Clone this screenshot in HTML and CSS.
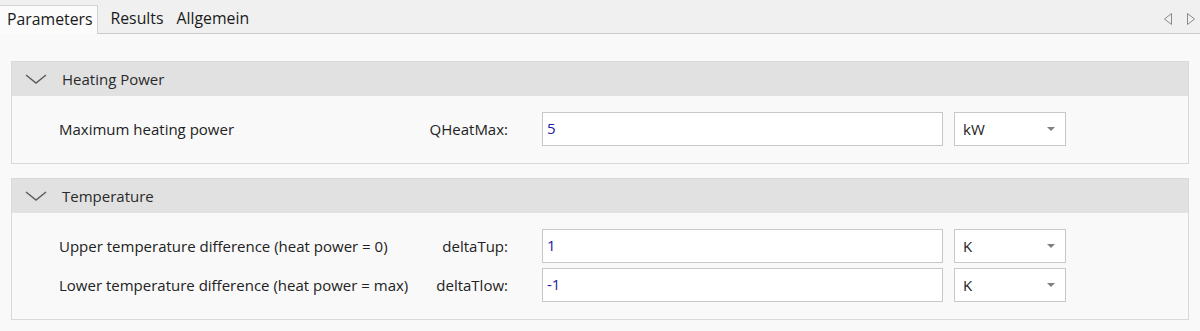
FILE: index.html
```html
<!DOCTYPE html>
<html>
<head>
<meta charset="utf-8">
<link rel="stylesheet" href="styles.css">
</head>
<body>
<div class="tabbar">
  <div class="tabs">
    <div class="tab active">Parameters</div>
    <div class="tab">Results</div>
    <div class="tab">Allgemein</div>
  </div>
  <div class="nav">
    <svg width="10" height="14" viewBox="0 0 10 14"><path d="M8.5 1.5 L1.5 7 L8.5 12.5 Z" fill="none" stroke="#8a8a8a" stroke-width="1"/></svg>
    <svg width="10" height="14" viewBox="0 0 10 14"><path d="M1.5 1.5 L8.5 7 L1.5 12.5 Z" fill="none" stroke="#8a8a8a" stroke-width="1"/></svg>
  </div>
</div>
<div class="content">
  <section class="group">
    <div class="group-head">
      <svg class="chev" width="22" height="10" viewBox="0 0 22 10"><path d="M1 1 L11 9 L21 1" fill="none" stroke="#5a5a5a" stroke-width="1.4"/></svg>
      <span>Heating Power</span>
    </div>
    <div class="group-body">
      <div class="row">
        <div class="labels"><span class="desc">Maximum heating power</span><span class="param">QHeatMax:</span></div>
        <div class="input">5</div>
        <div class="select"><span>kW</span><i class="caret"></i></div>
      </div>
    </div>
  </section>
  <section class="group">
    <div class="group-head">
      <svg class="chev" width="22" height="10" viewBox="0 0 22 10"><path d="M1 1 L11 9 L21 1" fill="none" stroke="#5a5a5a" stroke-width="1.4"/></svg>
      <span>Temperature</span>
    </div>
    <div class="group-body">
      <div class="row">
        <div class="labels"><span class="desc">Upper temperature difference (heat power = 0)</span><span class="param">deltaTup:</span></div>
        <div class="input">1</div>
        <div class="select"><span>K</span><i class="caret"></i></div>
      </div>
      <div class="row">
        <div class="labels"><span class="desc">Lower temperature difference (heat power = max)</span><span class="param">deltaTlow:</span></div>
        <div class="input">-1</div>
        <div class="select"><span>K</span><i class="caret"></i></div>
      </div>
    </div>
  </section>
</div>
</body>
</html>
```
FILE: styles.css
```css
* { box-sizing: border-box; }
html, body {
  margin: 0;
  padding: 0;
  background: #f9f9f9;
  font-family: "Open Sans", "Noto Sans", sans-serif;
  font-size: 15px;
  color: #222;
}
.tabbar {
  display: flex;
  justify-content: space-between;
  align-items: flex-end;
  height: 34px;
  background: #f0f0f0;
  border-bottom: 1px solid #c9c9c9;
  padding-top: 5px;
}
.tabs {
  display: flex;
  align-items: flex-end;
  height: 29px;
}
.tab {
  height: 28px;
  line-height: 26px;
  padding: 0 6px 0 7px;
  font-size: 15.8px;
  color: #1a1a1a;
}
.tab.active {
  height: 29px;
  margin-bottom: -1px;
  background: #fbfbfb;
  border-top: 1px solid #d2d2d2;
  border-right: 1px solid #d2d2d2;
  padding-right: 4px;
  margin-right: 6px;
}
.nav {
  display: flex;
  gap: 13px;
  align-self: flex-start;
  padding: 7px 4px 0 0;
}
.content {
  padding: 27px 11px 0 11px;
  display: flex;
  flex-direction: column;
  gap: 14px;
}
.group {
  border: 1px solid #d9d9d9;
  background: #f9f9f9;
}
.group-head {
  height: 34px;
  background: #e1e1e1;
  display: flex;
  align-items: center;
  padding-left: 13px;
  font-size: 15px;
  color: #2a2a2a;
}
.chev { margin-right: 15px; margin-top: -1px; }
.group-body {
  padding: 16px 0 17px 47px;
  display: flex;
  flex-direction: column;
  gap: 5px;
}
.row {
  display: grid;
  grid-template-columns: 472px 401px 112px;
  column-gap: 11px;
  align-items: center;
}
.labels {
  display: flex;
  justify-content: space-between;
  padding-right: 23px;
  font-size: 15px;
  color: #222;
}
.input {
  height: 34px;
  background: #fff;
  border: 1px solid #c8c8c8;
  color: #2020a8;
  padding: 5px 0 0 4px;
  font-size: 15px;
}
.select {
  height: 34px;
  background: #fff;
  border: 1px solid #c8c8c8;
  display: flex;
  align-items: center;
  justify-content: space-between;
  padding: 0 10px 0 8px;
  color: #222;
}
.caret {
  width: 0;
  height: 0;
  border-left: 4px solid transparent;
  border-right: 4px solid transparent;
  border-top: 4px solid #808080;
}
```
